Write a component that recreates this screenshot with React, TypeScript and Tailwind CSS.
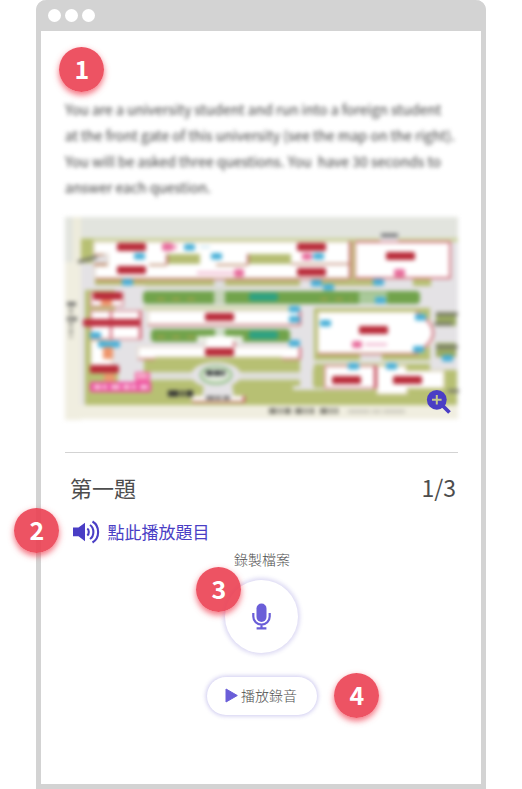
import React from "react";

const CJK = "font-['Noto_Sans_CJK_TC','Noto_Sans',sans-serif]";

type Box = [number, number, number, number, string, number?];

// x, y, width, height, fill, corner radius
const ground: Box[] = [
  [65, 217, 393, 202, "#f0eee0"],
  [65, 217, 393, 48, "#e2e4de"],
  [73, 217, 8, 48, "#eeecdc"],
  [65, 262, 16, 158, "#f0eee0"],
  [81, 238, 377, 167, "#e4e2e5"],
  [81, 238, 377, 4, "#cdd4a0"],
  [81, 239, 12, 24, "#b7c073"],
  [85, 290, 30, 115, "#b7c073"],
  [85, 369, 372, 36, "#b7c073"],
  [137, 357, 165, 14, "#b7c073"],
  [112, 320, 26, 50, "#e4e2e5"],
  [118, 350, 26, 32, "#e4e2e5"],
  [140, 372, 165, 8, "#dfdfda"],
  [300, 282, 13, 106, "#e4e2e5"],
  [293, 386, 80, 4, "#e4e2e5"],
  [95, 278, 50, 7, "#b9b86f"],
  [145, 278, 155, 8, "#b9bd78"],
  [214, 276, 11, 32, "#dddddc"],
  [312, 278, 68, 8, "#b9bd78"],
  [413, 279, 18, 7, "#b7c073"],
  [143, 306, 158, 4, "#d3dab2"],
  [314, 308, 118, 52, "#b7c073"],
  [360, 354, 22, 10, "#e4e2e5"],
  [314, 360, 116, 4, "#dfe0d6"],
  [314, 364, 143, 24, "#b7c073"],
  [430, 308, 27, 62, "#e4e2e5"],
  [436, 312, 20, 14, "#98a961"],
  [436, 343, 20, 14, "#98a961"],
];

const lawns: Box[] = [
  [143, 291, 277, 13, "#71a34b", 4],
  [151, 329, 139, 13, "#71a34b", 4],
  [214, 290, 11, 14, "#c7d4bb"],
  [359, 292, 28, 12, "#a9c99a"],
  [249, 293, 29, 8, "#2da284", 3],
  [249, 331, 29, 8, "#2da284", 3],
  [215, 328, 10, 8, "#cfdec9"],
  [197, 336, 46, 6, "#e7ece0"],
  [207, 336, 26, 14, "#ffffff"],
];

const buildings: { points: string; stroke?: string }[] = [
  { points: "94,242 350,242 350,278 95,278 95,266 108,266 108,254 94,254" },
  { points: "355,242 450,242 450,278 355,278", stroke: "#d3737f" },
  { points: "91,293 123,293 123,306 91,306", stroke: "#dd9da4" },
  { points: "91,311 141,311 141,339 91,339", stroke: "#dd9da4" },
  { points: "91,341 112,341 112,369 91,369" },
  { points: "148,311 300,311 300,325 148,325" },
  { points: "138,347 205,347 205,340 235,340 235,347 300,347 300,359 282,359 282,357 155,357 155,359 138,359" },
  { points: "318,312 418,312 433,323 433,343 418,353 318,353" },
  { points: "325,366 375,366 375,388 325,388", stroke: "#dd9da4" },
  { points: "377,366 406,366 406,371 444,371 444,388 407,388 407,394 377,394" },
  { points: "192,396 244,396 244,401 192,401" },
];

const notches: Box[] = [
  [167, 254, 33, 10, "#b5bd72"],
  [248, 254, 43, 10, "#b5bd72"],
  [94, 254, 10, 2, "#c49579"],
  [94, 263, 13, 3, "#c49579"],
  [166, 254, 2, 10, "#bd6569"],
  [149, 264, 18, 2, "#c49579"],
  [247, 254, 2, 10, "#bd6569"],
  [216, 264, 32, 2, "#c49579"],
  [291, 263, 59, 2, "#c99b88"],
  [349, 241, 2, 38, "#c25a5d"],
  [351, 241, 4, 38, "#c6c588"],
  [110, 311, 2, 28, "#cf5367"],
  [139, 311, 2, 28, "#cf5367"],
  [299, 347, 2, 12, "#cf5367"],
  [299, 311, 2, 14, "#cf5367"],
  [233, 335, 2, 12, "#cf5367"],
  [243, 396, 2, 6, "#c34357"],
  [374, 366, 3, 22, "#c34357"],
];

const redTags: [number, number][] = [
  [117, 243], [117, 266], [297, 243], [297, 268], [386, 252], [93, 292],
  [205, 313], [205, 348], [90, 365], [359, 326], [332, 376], [393, 376],
];

const blueTags: [number, number][] = [
  [134, 253], [184, 244], [211, 253], [313, 253], [122, 279], [311, 280], [323, 284],
  [375, 297], [373, 279], [289, 306], [289, 316], [289, 340], [320, 320], [415, 314],
  [413, 346], [442, 355], [348, 363], [386, 363], [90, 332], [98, 341], [109, 341],
];

const pinkTags: Box[] = [
  [162, 243, 11, 8, "#e86e9d", 2],
  [173, 244, 4, 6, "#f4b3cb", 1],
  [302, 253, 10, 7, "#e86e9d", 2],
  [234, 269, 10, 8, "#e86e9d", 2],
  [394, 269, 11, 8, "#e86e9d", 2],
  [352, 341, 10, 7, "#e86e9d", 2],
  [103, 347, 10, 12, "#ee966c", 1],
  [104, 374, 11, 7, "#ee966c", 1],
  [101, 299, 11, 7, "#ee966c", 1],
  [135, 372, 15, 13, "#f26fa8", 1],
  [90, 382, 61, 10, "#ed4f9f", 1],
];

const boxes = (items: Box[]) =>
  items.map(([x, y, w, h, fill, r = 0], i) => (
    <rect key={i} x={x} y={y} width={w} height={h} fill={fill} rx={r} />
  ));

function CampusMap() {
  return (
    <svg viewBox="65 217 393 202" className="block h-[202px] w-[393px] overflow-visible blur-[1.9px]">
      {boxes(ground)}
      {buildings.map((b, i) => (
        <polygon key={i} points={b.points} fill="#fff" stroke={b.stroke ?? "#e3d2c0"} strokeWidth={b.stroke ? 2 : 1.2} />
      ))}
      {boxes(notches)}
      {boxes(lawns)}
      <path d="M96 279h252M148 325h152M282 359h18M138 359h17M318 354h100M192 402h52" stroke="#c66b6b" strokeWidth="1.3" />
      <path d="M416 312q34 21 0 41" fill="none" stroke="#cd6876" strokeWidth="2" />
      <ellipse cx="216" cy="375" rx="25" ry="13" fill="#e4e2e5" />
      <path d="M204 384h28l2 12h-32z" fill="#e4e2e5" />
      <ellipse cx="216" cy="375" rx="15" ry="8.5" fill="#e4ebdf" stroke="#80b572" strokeWidth="2" />
      {blueTags.map(([x, y], i) => (
        <rect key={i} x={x} y={y} width="11" height="6.5" rx="1.5" fill="#48b0d8" />
      ))}
      {boxes(pinkTags)}
      <rect x="83" y="319" width="57" height="7.5" rx="2" fill="#bd3040" />
      {redTags.map(([x, y], i) => (
        <rect key={i} x={x} y={y} width="29" height="8" rx="1.5" fill="#b92b39" />
      ))}
      <path d="M94 387h54" stroke="#fbd0e4" strokeWidth="4" strokeDasharray="7 2 4 4 9 3" />
      <path d="M138 376h10" stroke="#fff" strokeWidth="3" strokeDasharray="3 2" />
      <path d="M157 299h38M157 337h38M320 299h32" stroke="#a7a34c" strokeWidth="2" strokeDasharray="8 7" />
      <path d="M197 273h36M365 344.500h22" stroke="#f2bdd3" strokeWidth="3" />
      <path d="M200 247h10" stroke="#c6e6f0" strokeWidth="2" />
      <path d="M381 235.500h17" stroke="#77777a" strokeWidth="4" />
      <path d="M380 239.500h18" stroke="#e8e6e9" strokeWidth="4" />
      <path d="M78 262l19-5M436 314h22M434 324h18M436 347h22M448 391h11" stroke="#77776c" strokeWidth="3" />
      <path d="M168 393.500h25" stroke="#333" strokeWidth="6" strokeDasharray="11 2 3 2" />
      <path d="M206 373h19" stroke="#353a3b" strokeWidth="5" strokeDasharray="7 1" />
      <path d="M206 398h24" stroke="#666" strokeWidth="3.500" strokeDasharray="9 1 5 2" />
      <path d="M67 304h9M67 319h10" stroke="#727270" strokeWidth="4" />
      <path d="M71 308v30" stroke="#aaa9a0" strokeWidth="4" strokeDasharray="5 2" />
      <path d="M269 411h45M320 411h18" stroke="#87867c" strokeWidth="6" strokeDasharray="8 2 3 2 7 4" />
      <path d="M348 411.500h58" stroke="#d0cec2" strokeWidth="4" strokeDasharray="22 2 9 2" />
    </svg>
  );
}

function Badge({ n, place }: { n: number; place: string }) {
  return (
    <div
      className={`absolute ${place} flex size-[45px] items-center justify-center rounded-full bg-[#eb4052]/90 pb-[2px] pl-[1px] text-[25px] leading-none font-bold text-white shadow-[0_3px_6px_rgba(240,50,70,0.7)]`}
    >
      {n}
    </div>
  );
}

export default function App() {
  return (
    <div className={`relative flex h-[789px] w-[522px] overflow-hidden bg-white pl-9 ${CJK}`}>
      <main className="flex w-[450px] flex-col rounded-t-[10px] border-x-[5px] border-b-[5px] border-[#d3d3d3] bg-white">
        <header className="-mx-[5px] flex h-[31px] shrink-0 items-center gap-1 rounded-t-[10px] bg-[#d3d3d3] pl-3">
          <span className="size-[13px] rounded-full bg-white" />
          <span className="size-[13px] rounded-full bg-white" />
          <span className="size-[13px] rounded-full bg-white" />
        </header>

        <section className="px-6 pt-[65px]">
          <p className="h-[105px] text-[14px] leading-[26px] whitespace-pre text-[#3c3c3c] blur-[1.9px]">
            {"You are a university student and run into a foreign student\nat the front gate of this university (see the map on the right).\nYou will be asked three questions. You  have 30 seconds to\nanswer each question."}
          </p>
          <div className="relative mt-4 w-[393px]">
            <CampusMap />
            <svg viewBox="0 0 25 25" className="absolute top-[172px] left-[361px] size-[25px]">
              <path d="M16 16l7.500 7.500" stroke="#4a3ec5" strokeWidth="3.800" />
              <circle cx="10.800" cy="10.800" r="9.900" fill="#4a3ec5" />
              <path d="M10.800 6v9.600M6 10.800h9.600" stroke="#c4c98b" strokeWidth="2" />
            </svg>
          </div>
          <hr className="mt-[33px] w-[393px] border-[#d3d3d3]" />
        </section>

        <section className="flex flex-col items-center">
          <div className="mt-4 flex h-9 w-full items-center justify-between pr-[25px] pl-[29px] text-[22px] text-[#4d4d4d]">
            <h1>第一題</h1>
            <span className="text-[23px]">1/3</span>
          </div>
          <button className="mt-[15px] flex h-6 items-center gap-[7.5px] self-start pl-8 text-[17px] text-[#4a3ec5]">
            <svg viewBox="0 0 27 24" className="h-6 w-[27px]" fill="none" stroke="#4a3ec5" strokeWidth="2.100">
              <path d="M0 7.500h5.500L12 2.800v18.400l-6.500-5H0z" fill="#4a3ec5" stroke="none" />
              <path d="M14.300 8.500c2 1.500 2 5.500 0 7M17 5c4.500 3 4.500 11 0 14M19.500 1.500c7.500 4.500 7.500 16.500 0 21" />
            </svg>
            點此播放題目
          </button>
          <p className="mt-[5px] ml-[2px] h-5 text-[14px] leading-5 font-light text-[#4d4d4d]">錄製檔案</p>
          <button className="mt-[11px] ml-[1px] flex size-[73px] items-center justify-center rounded-full bg-white shadow-[0_0_4px_2px_rgba(74,62,197,0.2)]">
            <svg viewBox="0 0 19 27" className="h-[27px] w-[19px]" fill="none" stroke="#6a5ed8" strokeWidth="2.200">
              <rect x="4.500" y="0.500" width="10" height="18.500" rx="5" fill="#6a5ed8" stroke="none" />
              <path d="M1.300 10v3.500a8.200 8.200 0 0 0 16.400 0V10M9.500 21.500V26M4.600 25.400h9.800" />
            </svg>
          </button>
          <button className="mt-6 ml-[2px] flex h-[38px] w-[110px] items-center rounded-full bg-white pb-[2px] pl-[18px] text-[14px] font-light text-[#4d4d4d] shadow-[0_0_4px_1px_rgba(74,62,197,0.28)]">
            <svg viewBox="0 0 13 15" className="mt-px mr-[3px] h-[15px] w-[13px]">
              <path d="M1 1v13L12.300 7.500z" fill="#6a5ed8" stroke="#6a5ed8" strokeLinejoin="round" />
            </svg>
            播放錄音
          </button>
        </section>
      </main>

      <Badge n={1} place="top-[47px] left-[59px]" />
      <Badge n={2} place="top-[508px] left-[14px]" />
      <Badge n={3} place="top-[567px] left-[196px]" />
      <Badge n={4} place="top-[673px] left-[334px]" />
    </div>
  );
}
